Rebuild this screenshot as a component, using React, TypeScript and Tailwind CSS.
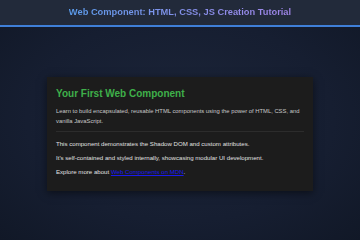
export default function App() {
  return (
    <div className="flex h-[240px] w-[360px] flex-col overflow-hidden bg-[radial-gradient(ellipse_at_center,#1c2539_0%,#161e31_60%,#111827_100%)] font-['Liberation_Sans',Arial,sans-serif]">
      <header className="flex h-[27px] shrink-0 items-center justify-center border-b-2 border-[#3f7fd8] bg-[#222a3a]">
        <h1 className="bg-gradient-to-r from-[#5a9cec] to-[#a084e8] bg-clip-text text-[9.3px] font-bold text-transparent">
          Web Component: HTML, CSS, JS Creation Tutorial
        </h1>
      </header>

      <main className="flex justify-center pt-[50px]">
        <div className="w-[266px] bg-[#1c1c1c] px-[9px] pt-[10px] pb-[15px] shadow-[0_2px_8px_rgba(0,0,0,0.5)]">
          <h2 className="text-[10px] font-bold leading-[14px] text-[#3fb04a]">Your First Web Component</h2>
          <p className="mt-[5px] text-[5.85px] leading-[10px] text-[#c8c8c8]">
            Learn to build encapsulated, reusable HTML components using the power of HTML, CSS, and
            vanilla JavaScript.
          </p>
          <div className="mt-[5px] border-t border-[#2c2c2c]" />
          <div className="mt-[8px] flex flex-col gap-[6px] text-[6.1px] leading-[8px] text-[#e0e0e0]">
            <p>This component demonstrates the Shadow DOM and custom attributes.</p>
            <p>It's self-contained and styled internally, showcasing modular UI development.</p>
            <p>
              Explore more about{" "}
              <a href="#" className="text-[#1a1aee] underline">
                Web Components on MDN
              </a>
              .
            </p>
          </div>
        </div>
      </main>
    </div>
  )
}
